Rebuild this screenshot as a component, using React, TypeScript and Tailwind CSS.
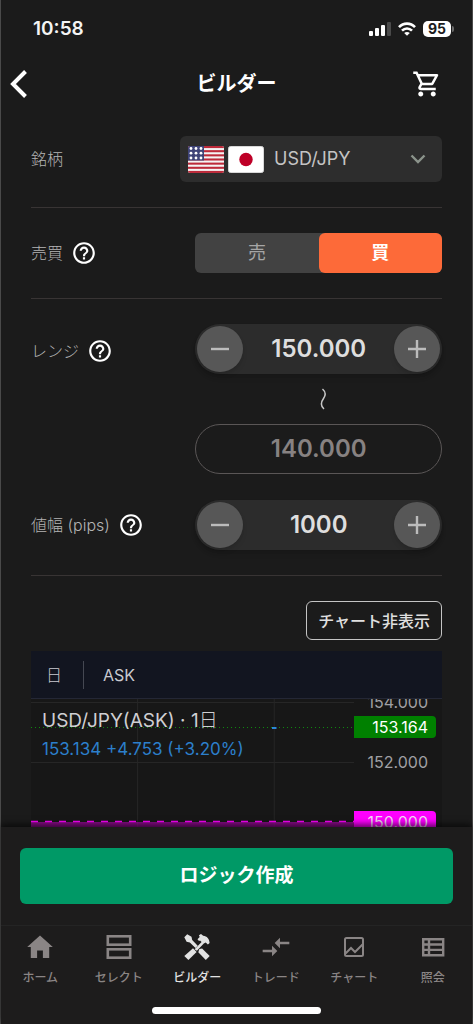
import { useState } from "react";
import type { ReactNode } from "react";
import clsx from "clsx";
import { MdCompareArrows, MdHelpOutline, MdOutlineShoppingCart } from "react-icons/md";

const LINES = [
  { price: 154, tag: "text-[#a0a0a4]" },
  { price: 152, tag: "text-[#a0a0a4]" },
  { price: 153.164, tag: "bg-[#008000] text-white" },
  { price: 150, tag: "bg-[#ff00ff] text-[#f3d6f3]" },
];

// chart y of a price, in px below the chart toolbar
const priceY = (price: number) => Math.round((154 - price) * 30) + 3;

const StatusBar = () => (
  <div className="flex h-[58px] items-center justify-between pl-8 pr-[18px]">
    <span className="font-['Inter'] text-[19px] font-semibold text-[#f4f4f4]">10:58</span>
    <div className="flex items-center gap-[7px]">
      <svg width="22" height="15" viewBox="0 0 22 15" fill="#fff">
        <rect x="0" y="9" width="4" height="5" rx="1" />
        <rect x="6" y="6" width="4" height="8" rx="1" />
        <rect x="12" y="3" width="4" height="11" rx="1" />
        <rect x="18" y="0" width="4" height="14" rx="1" fill="#4a4a4a" />
      </svg>
      <svg width="18" height="14" viewBox="0 0 18 14" fill="none" stroke="#fff" strokeWidth="2.6">
        <path d="M1 5.2C5.4.4 12.6.4 17 5.2" />
        <path d="M4 8.7c2.9-3 7.1-3 10 0" />
        <path d="M9 13.800 6.200 11c1.500-1.500 4.100-1.500 5.600 0z" fill="#fff" stroke="none" />
      </svg>
      <div className="flex items-center gap-px">
        <span className="flex h-4 w-7 items-center justify-center rounded-[5px] bg-white font-['Inter'] text-sm font-bold leading-none text-[#1c1c1c]">
          95
        </span>
        <span className="h-1.5 w-0.5 rounded-r-full bg-[#6a6a6a]" />
      </div>
    </div>
  </div>
);

const Header = () => (
  <header className="flex h-[52px] items-center justify-between pl-[9px] pr-[30px]">
    <button aria-label="戻る" className="w-[51px]">
      <svg width="18" height="28" viewBox="0 0 18 28" fill="none" stroke="#fff" strokeWidth="4">
        <path d="M15.5 1.5 3 14l12.5 12.5" />
      </svg>
    </button>
    <h1 className="text-xl font-bold text-white">ビルダー</h1>
    <button aria-label="カート">
      <MdOutlineShoppingCart size={30} color="#fff" />
    </button>
  </header>
);

const UsFlag = () => (
  <svg width="36" height="27" viewBox="0 0 36 27">
    <clipPath id="us">
      <rect width="36" height="27" rx="2" />
    </clipPath>
    <g clipPath="url(#us)">
      <rect width="36" height="27" fill="#f4f4f4" />
      {[0, 1, 2, 3, 4, 5, 6].map((i) => (
        <rect key={i} y={i * 4.15} width="36" height="2.08" fill="#bd2a3a" />
      ))}
      <rect width="16" height="14.5" fill="#3f4478" />
      {[3, 8, 13].map((x) =>
        [2.5, 7.2, 12].map((y) => <circle key={`${x}-${y}`} cx={x} cy={y} r="1.4" fill="#fff" />)
      )}
    </g>
  </svg>
);

const JpFlag = () => (
  <svg width="36" height="27" viewBox="0 0 36 27">
    <rect x=".5" y=".5" width="35" height="26" rx="2" fill="#fff" stroke="#d8d8d8" />
    <circle cx="18" cy="13.5" r="6.7" fill="#be0027" />
  </svg>
);

const Label = ({ children, help, htmlFor }: { children: string; help?: boolean; htmlFor?: string }) => (
  <div className="flex items-center gap-2 text-[#b4b4b4]">
    <label htmlFor={htmlFor} className="text-base font-light">
      {children}
    </label>
    {help && (
      <button aria-label={`${children}の説明`}>
        <MdHelpOutline size={26} color="#fff" />
      </button>
    )}
  </div>
);

const Row = ({ children, className }: { children: ReactNode; className?: string }) => (
  <div className={clsx("flex items-center justify-between", className)}>{children}</div>
);

const RoundButton = ({ label, plus, onClick }: { label: string; plus?: boolean; onClick: () => void }) => (
  <button
    aria-label={label}
    onClick={onClick}
    className="flex size-[46px] shrink-0 items-center justify-center rounded-full bg-[#575757] shadow-md"
  >
    <svg width="20" height="20" viewBox="0 0 20 20" stroke="#bcbcbc" strokeWidth="2.4">
      <path d={plus ? "M1 10h18M10 1v18" : "M1 10h18"} />
    </svg>
  </button>
);

const Stepper = ({ id, start, step, digits }: { id: string; start: number; step: number; digits: number }) => {
  const [value, setValue] = useState(start);
  return (
    <div className="flex h-[50px] w-full items-center rounded-full bg-[#2c2c2c] px-0.5 shadow-md">
      <RoundButton label="減らす" onClick={() => setValue(value - step)} />
      <input
        id={id}
        inputMode="decimal"
        value={value.toFixed(digits)}
        onChange={(e) => setValue(Number(e.target.value) || 0)}
        className="w-full min-w-0 bg-transparent text-center font-['Inter'] text-2xl font-semibold text-[#dedede] outline-none"
      />
      <RoundButton label="増やす" plus onClick={() => setValue(value + step)} />
    </div>
  );
};

const SideToggle = () => {
  const [side, setSide] = useState("買");
  return (
    <div className="grid h-10 w-3/5 grid-cols-2 rounded-md bg-[#424242]">
      {["売", "買"].map((s) => (
        <button
          key={s}
          aria-pressed={side === s}
          onClick={() => setSide(s)}
          className={clsx(
            "rounded-md text-lg",
            side === s ? "bg-[#fd6a39] font-bold text-white" : "text-[#a6a6a6]"
          )}
        >
          {s}
        </button>
      ))}
    </div>
  );
};

const Chart = () => (
  <section className="mt-[11px] bg-[#171717]">
    <div className="flex h-12 items-center border-b border-[#242735] bg-[#121520] text-base text-[#c9cad0]">
      <button className="w-[52px] pr-1.5 text-center font-light">日</button>
      <span className="h-7 w-px bg-[#454852]" />
      <button className="px-[19px]">ASK</button>
    </div>
    <div className="relative flex h-[260px] overflow-hidden">
      <div className="relative flex-1">
        <svg className="absolute inset-0 size-full">
          <g stroke="#262626">
            <path d="M0 3.5h2000M0 63.5h2000" />
            <line x1="33%" x2="33%" y1="0" y2="100%" />
            <line x1="75.3%" x2="75.3%" y1="0" y2="100%" />
          </g>
          <rect y="123" width="100%" height="137" fill="#ff00ff" fillOpacity=".5" />
          <line x1="0" x2="100%" y1="28.5" y2="28.5" stroke="#0f8a0f" strokeDasharray="1 3" />
          <line x1="74.6%" x2="76%" y1="29" y2="29" stroke="#2b86d9" strokeWidth="2" />
          <line x1="0" x2="100%" y1="122.5" y2="122.5" stroke="#ff00ff" strokeWidth="1.5" strokeDasharray="7 7" />
        </svg>
        <div className="relative whitespace-nowrap pl-[11px] pt-2">
          <p className="text-[19px] leading-7 text-[#cfcfd2]">
            USD/JPY(ASK) · 1<span className="font-light">日</span>
          </p>
          <p className="text-[17px] leading-7 text-[#2c7fcb]">153.134 +4.753 (+3.20%)</p>
        </div>
      </div>
      <div className="relative w-[88px]">
        {LINES.map(({ price, tag }) => (
          <span
            key={price}
            style={{ top: priceY(price) - 11 }}
            className={clsx("absolute left-0 h-[22px] w-[82px] rounded-r-sm pr-2 text-right text-base leading-[22px]", tag)}
          >
            {price.toFixed(3)}
          </span>
        ))}
      </div>
    </div>
  </section>
);

const HomeIcon = () => (
  <svg width="28" height="28" viewBox="0 0 28 28" fill="currentColor">
    <path d="M14 2.500 1.200 14h3.600v11h6.300v-7.400h5.800V25h6.300V14h3.600z" />
  </svg>
);

const SelectIcon = () => (
  <svg width="28" height="28" viewBox="0 0 28 28" fill="none" stroke="currentColor" strokeWidth="2.6">
    <rect x="2.8" y="3.3" width="22.4" height="8.4" />
    <rect x="2.8" y="16.3" width="22.4" height="8.4" />
  </svg>
);

// screwdriver crossed with a claw hammer
const BuilderIcon = () => (
  <svg width="28" height="28" viewBox="0 0 28 28" fill="currentColor">
    <path d="M1.300 4.200 4.200 1.300l4.300 2.400.7 3.300 5.500 5.700-2.200 2.200-5.700-5.500-3.200-.7z" />
    <path d="m16.300 16.100 2.800-.7 7.600 7.500-3.900 4-7.500-7.600z" />
    <path d="m10 15.200 3.600 3.700-8.200 8-4.100-4z" />
    <path d="m11.600 16.200 7-7.100-1.600-1.700-1 .5-1.500-1.600L16.700 4l-.8-1.800L18 .9l2.200 1.800c3.700.200 6.300 3.200 6.400 7.400l-1.700 1.500-2.200-2-1.900.9-6.900 7.300z" />
  </svg>
);

const ChartIcon = () => (
  <svg width="28" height="28" viewBox="0 0 28 28" fill="none" stroke="currentColor" strokeWidth="2">
    <rect x="5" y="5" width="18" height="18" rx="1.5" />
    <path d="m5.500 20.500 5.500-5.500 4 4 7.500-7.500" />
  </svg>
);

const ListIcon = () => (
  <svg width="28" height="28" viewBox="0 0 28 28" fill="none" stroke="currentColor" strokeWidth="2.4">
    <path d="M4.200 6.200h20v16h-20zM4.200 11.500h20M4.200 16.900h20M10 6v16" />
  </svg>
);

const TABS = [
  { name: "ホーム", icon: <HomeIcon /> },
  { name: "セレクト", icon: <SelectIcon /> },
  { name: "ビルダー", icon: <BuilderIcon />, active: true },
  { name: "トレード", icon: <MdCompareArrows size={32} /> },
  { name: "チャート", icon: <ChartIcon /> },
  { name: "照会", icon: <ListIcon /> },
];

const TabBar = () => (
  <nav className="grid grid-cols-6 border-t border-[#242424] pt-1.5">
    {TABS.map(({ name, icon, active }) => (
      <a
        key={name}
        href="#"
        className={clsx(
          "flex flex-col items-center gap-1 text-xs font-medium leading-6",
          active ? "text-[#e2e2e2]" : "text-[#8a8585]"
        )}
      >
        <span className="flex h-[30px] items-center">{icon}</span>
        {name}
      </a>
    ))}
  </nav>
);

export default function App() {
  return (
    <div className="flex h-screen flex-col border-x border-[#4a4a4a] bg-[#1b1b1b] font-['Inter','Noto_Sans_CJK_JP',sans-serif]">
      <StatusBar />
      <Header />
      <main className="min-h-0 flex-1 overflow-y-auto px-[30px] pt-[26px] [scrollbar-width:none]">
        <Row className="border-b border-[#383434] pb-[25px]">
          <Label htmlFor="pair">銘柄</Label>
          <div className="flex h-[46px] w-[262px] items-center gap-1 rounded-md bg-[#2d2d2d] pl-2 pr-3">
            <UsFlag />
            <JpFlag />
            <select
              id="pair"
              className="-mr-7 ml-1.5 min-w-0 flex-1 appearance-none bg-transparent text-lg text-[#c4c4c4] outline-none"
            >
              <option>USD/JPY</option>
            </select>
            <svg className="pointer-events-none" width="24" height="24" viewBox="0 0 24 24" fill="none" stroke="#8b938b" strokeWidth="2.4">
              <path d="m5.500 8.500 6.500 6.500 6.500-6.500" />
            </svg>
          </div>
        </Row>

        <Row className="border-b border-[#383434] py-[25px]">
          <Label help>売買</Label>
          <SideToggle />
        </Row>

        <div className="border-b border-[#383434] py-[25px]">
          <Row className="items-start">
            <div className="flex h-[54px] items-center">
              <Label help htmlFor="range">レンジ</Label>
            </div>
            <div className="flex w-3/5 flex-col items-center">
              <Stepper id="range" start={150} step={0.001} digits={3} />
              <svg className="my-[14px]" width="18" height="22" viewBox="0 0 18 22" fill="none" stroke="#c8c8c8" strokeWidth="1.5">
                <path d="M12.500 1C16 4 16 7 13.500 10.500S10 17.500 14 21" />
              </svg>
              <output className="flex h-[50px] w-full items-center justify-center rounded-full border border-[#5a5656] font-['Inter'] text-2xl font-semibold text-[#878282]">
                140.000
              </output>
            </div>
          </Row>
          <Row className="mt-[26px]">
            <Label help htmlFor="pips">値幅 (pips)</Label>
            <div className="w-3/5">
              <Stepper id="pips" start={1000} step={1} digits={0} />
            </div>
          </Row>
        </div>

        <div className="flex justify-end pt-[25px]">
          <button className="h-[39px] rounded-md border border-[#c4c4c4] px-[11px] text-base font-medium text-[#e0e0e0]">
            チャート非表示
          </button>
        </div>

        <Chart />
      </main>

      <footer className="relative bg-[#1d1c1c] shadow-[0_-3px_6px_#0009]">
        <div className="px-[19px] pb-[21px] pt-[21px]">
          <button className="h-14 w-full rounded-md bg-[#009966] text-[19px] font-bold text-white">
            ロジック作成
          </button>
        </div>
        <TabBar />
        <div className="flex justify-center pb-2.5 pt-[17px]">
          <span className="h-[7px] w-[169px] rounded-full bg-white" />
        </div>
      </footer>
    </div>
  );
}
